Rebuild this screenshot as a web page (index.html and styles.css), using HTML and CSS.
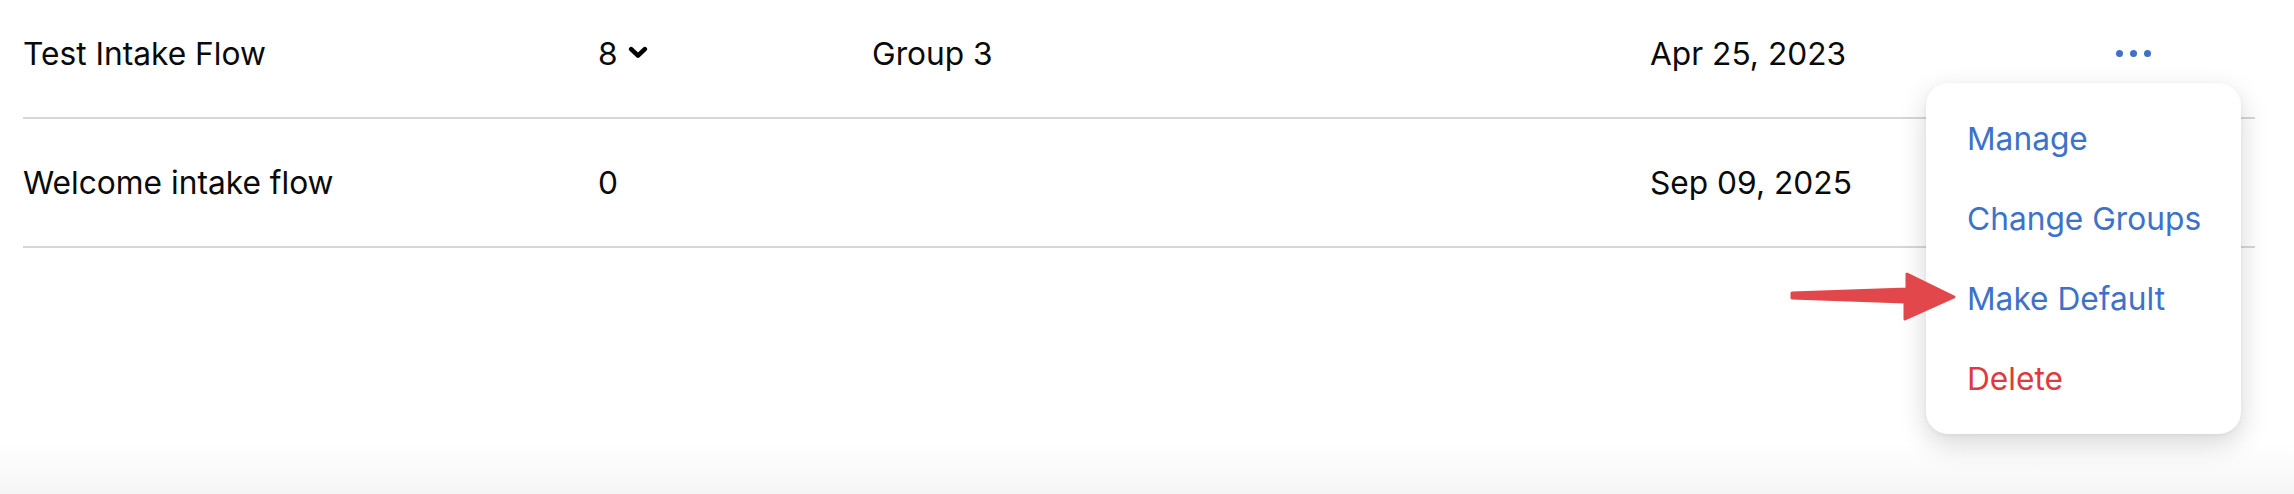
FILE: index.html
```html
<!DOCTYPE html>
<html lang="en">
<head>
<meta charset="utf-8">
<title>Intake Flows</title>
<link rel="stylesheet" href="styles.css">
</head>
<body>
<div class="page">
  <div class="table">
    <div class="row">
      <div class="cell name">Test Intake Flow</div>
      <div class="cell count">8
        <svg class="chev" width="20" height="13" viewBox="0 0 20 13"><polyline points="3.2,3.2 10,9.6 16.8,3.2" fill="none" stroke="#000" stroke-width="4.6" stroke-linecap="round" stroke-linejoin="round"/></svg>
      </div>
      <div class="cell group">Group 3</div>
      <div class="cell date">Apr 25, 2023</div>
      <div class="cell actions">
        <span class="dots"><i></i><i></i><i></i></span>
      </div>
    </div>
    <div class="row">
      <div class="cell name">Welcome intake flow</div>
      <div class="cell count">0</div>
      <div class="cell group"></div>
      <div class="cell date">Sep 09, 2025</div>
      <div class="cell actions"></div>
    </div>
  </div>

  <div class="menu">
    <div class="item">Manage</div>
    <div class="item">Change Groups</div>
    <div class="item">Make Default</div>
    <div class="item danger">Delete</div>
  </div>

  <svg class="arrow" width="175" height="58" viewBox="0 0 175 58">
    <polygon points="7,25 122,21 122,6 169,29 120,51 120,34 7,30" fill="#e2474b" stroke="#e2474b" stroke-width="3" stroke-linejoin="round"/>
  </svg>
</div>
</body>
</html>
```

FILE: styles.css
```css
html, body {
  margin: 0;
  padding: 0;
}
body {
  width: 2294px;
  height: 494px;
  overflow: hidden;
  background: linear-gradient(to bottom, #ffffff 0px, #ffffff 444px, #f5f5f5 494px);
  font-family: Inter, "Liberation Sans", sans-serif;
  color: #0a0a0a;
}
.page {
  position: relative;
  display: flow-root;
  height: 494px;
}
.table {
  margin-top: -10px;
  margin-left: 23px;
  width: 2232px;
}
.row {
  display: grid;
  grid-template-columns: 575px 274px 778px 465px 1fr;
  align-items: center;
  height: 127px;
  border-bottom: 2px solid #d6d6da;
  font-size: 31.7px;
}
.count {
  display: flex;
  align-items: center;
  gap: 10px;
}
.chev {
  display: block;
  margin-top: -2px;
}
.actions {
  display: flex;
  align-items: center;
}
.dots {
  display: flex;
  gap: 7px;
  margin-left: 1px;
}
.dots i {
  display: block;
  width: 7px;
  height: 7px;
  border-radius: 50%;
  background: #3d72c8;
}
.menu {
  position: absolute;
  left: 1926px;
  top: 83px;
  width: 315px;
  height: 351px;
  box-sizing: border-box;
  padding: 16px 0 15px 41px;
  background: #fff;
  border-radius: 22px;
  box-shadow: 0 10px 28px rgba(0, 0, 0, 0.16), 0 1px 4px rgba(0, 0, 0, 0.05);
}
.item {
  font-size: 31.7px;
  line-height: 80px;
  color: #3d72c8;
  white-space: nowrap;
}
.item.danger {
  color: #e0393e;
}
.arrow {
  position: absolute;
  left: 1785px;
  top: 268px;
}
```
